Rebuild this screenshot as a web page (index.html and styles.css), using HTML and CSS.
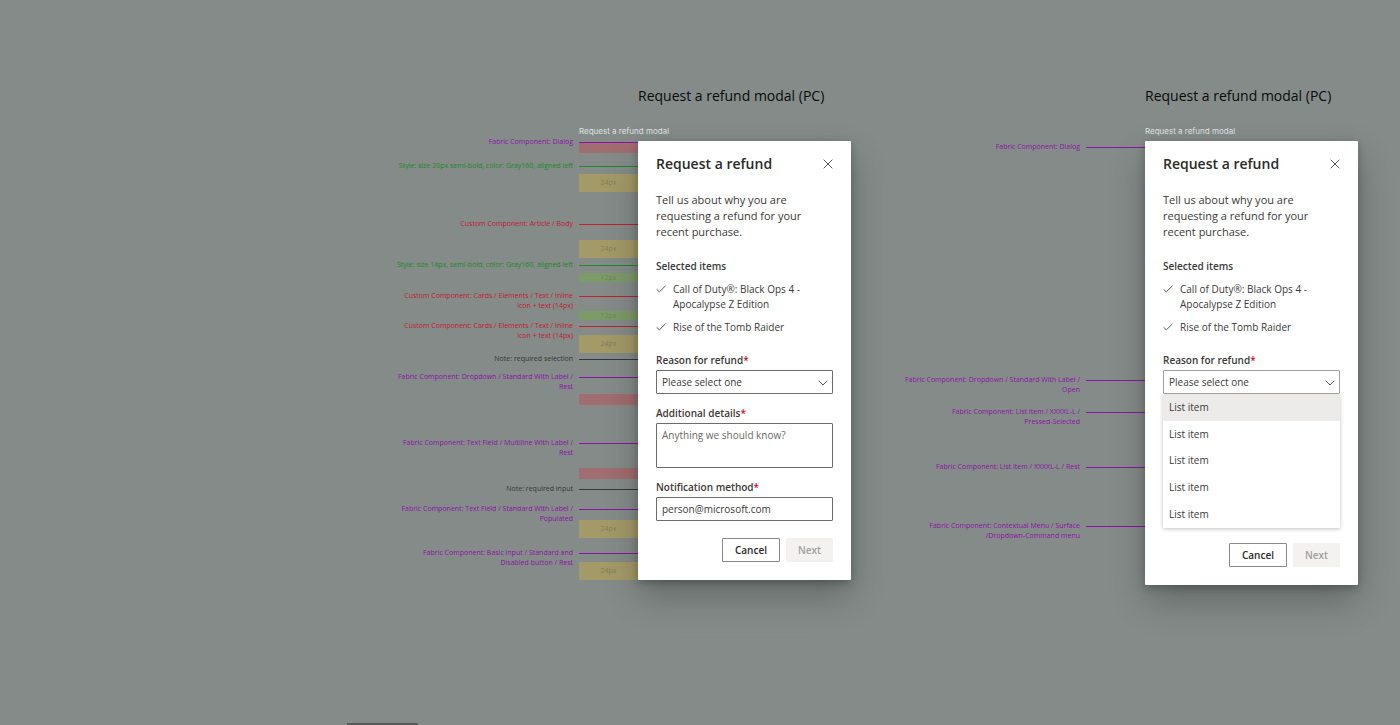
FILE: index.html
```
<!DOCTYPE html>
<html lang="en">
<head>
<meta charset="utf-8">
<title>Request a refund modal</title>
<link rel="stylesheet" href="styles.css">
</head>
<body>
<main class="canvas">
  <section class="board">
    <h2 class="board-title">Request a refund modal (PC)</h2>
    <p class="frame-name frame-name-wide">Request a refund modal</p>
    <div class="notes">
      <span class="band pink at-top"></span>
      <span class="band yellow at-body">24px</span>
      <span class="band yellow at-selected">24px</span>
      <span class="band green at-items">12px</span>
      <span class="band green at-item-gap">12px</span>
      <span class="band yellow at-reason">24px</span>
      <span class="band pink at-details"></span>
      <span class="band pink at-method"></span>
      <span class="band yellow at-actions">24px</span>
      <span class="band yellow at-bottom">24px</span>
      <p class="note purple n-dialog">Fabric Component: Dialog</p>
      <p class="note leaf n-title">Style: size 20px semi-bold, color: Gray160, aligned left</p>
      <p class="note red n-body">Custom Component: Article / Body</p>
      <p class="note leaf n-selected">Style: size 14px, semi-bold, color: Gray160, aligned left</p>
      <p class="note red n-item-one">Custom Component: Cards / Elements / Text / Inline<br>icon + text (14px)</p>
      <p class="note red n-item-two">Custom Component: Cards / Elements / Text / Inline<br>icon + text (14px)</p>
      <p class="note dark n-required">Note: required selection</p>
      <p class="note purple n-dropdown">Fabric Component: Dropdown / Standard With Label /<br>Rest</p>
      <p class="note purple n-multiline">Fabric Component: Text Field / Multiline With Label /<br>Rest</p>
      <p class="note dark n-input">Note: required input</p>
      <p class="note purple n-field">Fabric Component: Text Field / Standard With Label /<br>Populated</p>
      <p class="note purple n-buttons">Fabric Component: Basic input / Standard and<br>Disabled button / Rest</p>
    </div>
    <form class="modal">
      <header class="modal-head">
        <h1 class="modal-title">Request a refund</h1>
        <button class="close" type="button" aria-label="Close"><svg viewBox="0 0 10 10"><path d="M.7.7l8.6 8.6M9.3.7L.7 9.3"/></svg></button>
      </header>
      <p class="lead">Tell us about why you are<br>requesting a refund for your<br>recent purchase.</p>
      <h3 class="caption">Selected items</h3>
      <ul class="items">
        <li><svg viewBox="0 0 10 8"><path d="M.6 4.3l2.7 2.6L9.5.8"/></svg><span>Call of Duty®: Black Ops 4 -<br>Apocalypse Z Edition</span></li>
        <li><svg viewBox="0 0 10 8"><path d="M.6 4.3l2.7 2.6L9.5.8"/></svg><span>Rise of the Tomb Raider</span></li>
      </ul>
      <div class="field">
        <label for="reason">Reason for refund<b>*</b></label>
        <div class="select-box">
          <select id="reason"><option>Please select one</option></select>
          <svg viewBox="0 0 10 6"><path d="M.7.7L5 5 9.3.7"/></svg>
        </div>
      </div>
      <div class="field">
        <label for="details">Additional details<b>*</b></label>
        <textarea id="details" placeholder="Anything we should know?"></textarea>
      </div>
      <div class="field">
        <label for="method">Notification method<b>*</b></label>
        <input id="method" type="text" value="person@microsoft.com">
      </div>
      <footer class="actions">
        <button class="btn" type="button">Cancel</button>
        <button class="btn btn-next" type="button" disabled>Next</button>
      </footer>
    </form>
  </section>

  <section class="board">
    <h2 class="board-title">Request a refund modal (PC)</h2>
    <p class="frame-name">Request a refund modal</p>
    <div class="notes">
      <p class="note purple n-open-dialog">Fabric Component: Dialog</p>
      <p class="note purple n-open">Fabric Component: Dropdown / Standard With Label /<br>Open</p>
      <p class="note purple n-pressed">Fabric Component: List Item / XXXXL-L /<br>Pressed-Selected</p>
      <p class="note purple n-rest">Fabric Component: List Item / XXXXL-L / Rest</p>
      <p class="note purple n-menu">Fabric Component: Contextual Menu / Surface<br>/Dropdown-Command menu</p>
    </div>
    <form class="modal">
      <header class="modal-head">
        <h1 class="modal-title">Request a refund</h1>
        <button class="close" type="button" aria-label="Close"><svg viewBox="0 0 10 10"><path d="M.7.7l8.6 8.6M9.3.7L.7 9.3"/></svg></button>
      </header>
      <p class="lead">Tell us about why you are<br>requesting a refund for your<br>recent purchase.</p>
      <h3 class="caption">Selected items</h3>
      <ul class="items">
        <li><svg viewBox="0 0 10 8"><path d="M.6 4.3l2.7 2.6L9.5.8"/></svg><span>Call of Duty®: Black Ops 4 -<br>Apocalypse Z Edition</span></li>
        <li><svg viewBox="0 0 10 8"><path d="M.6 4.3l2.7 2.6L9.5.8"/></svg><span>Rise of the Tomb Raider</span></li>
      </ul>
      <div class="field">
        <label for="reason-open">Reason for refund<b>*</b></label>
        <div class="select-box is-open">
          <select id="reason-open"><option>Please select one</option></select>
          <svg viewBox="0 0 10 6"><path d="M.7.7L5 5 9.3.7"/></svg>
        </div>
        <ul class="menu" role="listbox" aria-label="Reason for refund">
          <li role="option" aria-selected="true">List item</li>
          <li role="option">List item</li>
          <li role="option">List item</li>
          <li role="option">List item</li>
          <li role="option">List item</li>
        </ul>
      </div>
      <footer class="actions actions-open">
        <button class="btn" type="button">Cancel</button>
        <button class="btn btn-next" type="button" disabled>Next</button>
      </footer>
    </form>
  </section>
  <div class="next-frame"></div>
</main>
</body>
</html>
```
FILE: styles.css
```
* { box-sizing: border-box; }

body, h1, h2, h3, p, ul { margin: 0; padding: 0; }

body {
  background: #848b89;
  color: #3a3938;
  font-family: "Open Sans", "Noto Sans", sans-serif;
  font-size: 10px;
}

ul { list-style: none; }

button, input, select, textarea { font: inherit; color: inherit; }

svg { fill: none; stroke: #5a5856; stroke-width: 1; }

.canvas {
  position: relative;
  display: flex;
  justify-content: flex-end;
  align-items: flex-start;
  gap: 51px;
  min-height: 100vh;
  padding: 84px 42px 0 0;
  overflow: hidden;
}

.board {
  display: grid;
  grid-template-columns: 243px 213px;
  grid-template-rows: 24px 33px auto;
}

.board-title {
  grid-column: 2;
  color: #0a0c0b;
  font-size: 14px;
  font-weight: 400;
  line-height: 24px;
  white-space: nowrap;
}

.frame-name {
  grid-column: 2;
  padding-top: 18px;
  color: #dfe2e1;
  font-family: Inter, sans-serif;
  font-size: 8px;
  line-height: 10px;
}

.frame-name-wide { grid-column: 1 / 3; padding-left: 184px; }

/* Spec annotations, pinned beside the part that they describe */
.notes { position: relative; grid-column: 1; }

.note {
  position: absolute;
  right: 0;
  padding-right: 65px;
  font-size: 7px;
  line-height: 10px;
  text-align: right;
  white-space: nowrap;
}

.note::after {
  content: "";
  position: absolute;
  top: 5px;
  right: 0;
  width: 59px;
  height: 1px;
  background: currentColor;
}

.purple { color: #8c14a6; }
.leaf { color: #1d8a25; }
.red { color: #c2202f; }
.dark { color: #343a38; }

.n-dialog { top: -4px; }
.n-title { top: 20px; }
.n-body { top: 78px; }
.n-selected { top: 119px; }
.n-item-one { top: 150px; }
.n-item-two { top: 180px; }
.n-required { top: 213px; }
.n-dropdown { top: 231px; }
.n-multiline { top: 297px; }
.n-input { top: 343px; }
.n-field { top: 363px; }
.n-buttons { top: 407px; }

.n-open-dialog { top: 1px; }
.n-open { top: 234px; }
.n-pressed { top: 266px; }
.n-rest { top: 321px; }
.n-menu { top: 380px; }

.band {
  position: absolute;
  right: 0;
  width: 59px;
  color: #857d5c;
  font-size: 7px;
  text-align: center;
}

.yellow { height: 18px; background: #a39a68; line-height: 18px; }
.green { height: 9px; background: #7d9a69; color: #6c8560; line-height: 9px; }
.pink { height: 11px; background: #a06d70; }

.at-top { top: 1px; }
.at-body { top: 33px; }
.at-selected { top: 99px; }
.at-items { top: 132px; }
.at-item-gap { top: 170px; }
.at-reason { top: 194px; }
.at-details { top: 253px; }
.at-method { top: 327px; }
.at-actions { top: 379px; }
.at-bottom { top: 421px; }

.modal {
  position: relative;
  grid-column: 2;
  padding: 13px 18px 18px;
  background: #fff;
  border-radius: 1px;
  box-shadow: 0 16px 36px rgba(0, 0, 0, .24), 0 3px 9px rgba(0, 0, 0, .24);
}

.modal-head { display: flex; justify-content: space-between; }

.modal-title { color: #2b2a29; font-size: 14px; font-weight: 600; line-height: 20px; }

.close {
  display: grid;
  place-items: center;
  width: 10px;
  height: 20px;
  padding: 0;
  border: 0;
  background: none;
}

.close svg { width: 10px; height: 10px; }

.lead {
  margin-top: 18px;
  font-size: 11px;
  line-height: 16px;
  white-space: nowrap;
}

.caption {
  margin-top: 19px;
  font-size: 10px;
  font-weight: 600;
  line-height: 14px;
}

.items {
  display: grid;
  gap: 8px;
  margin: 9px 0 18px;
  line-height: 15px;
}

.items li { display: flex; gap: 7px; white-space: nowrap; }
.items svg { width: 10px; height: 8px; margin-top: 3px; }

.field { display: grid; gap: 3px; }
.field + .field { margin-top: 12px; }
.field label { font-weight: 600; line-height: 14px; }
.field b { color: #c50f1f; font-weight: 600; }

.field input, .field select, .field textarea {
  display: block;
  width: 100%;
  height: 24px;
  margin: 0;
  padding: 0 5px;
  border: 1px solid #6e6c6a;
  border-radius: 1px;
  background: #fff;
  outline: 0;
  appearance: none;
}

.field textarea {
  height: 45px;
  padding: 4px 5px;
  line-height: 15px;
  resize: none;
}

.field textarea::placeholder { color: #6b6967; opacity: 1; }

.select-box { position: relative; }

.select-box svg {
  position: absolute;
  top: 10px;
  right: 5px;
  width: 10px;
  height: 6px;
  pointer-events: none;
}

.field .is-open select { border-color: #a19f9d; }

.menu {
  display: grid;
  grid-auto-rows: 1fr;
  min-height: 134px;
  margin-top: -3px;
  padding-bottom: 1px;
  background: #fff;
  box-shadow: 0 1px 4px rgba(0, 0, 0, .24);
}

.menu li { display: flex; align-items: center; padding: 0 6px; }
.menu [aria-selected="true"] { background: #edebe9; }

.actions {
  display: flex;
  justify-content: flex-end;
  gap: 6px;
  margin-top: 17px;
}

.actions-open { margin-top: 15px; }

.btn {
  height: 24px;
  padding: 0 12px;
  border: 1px solid #8a8886;
  border-radius: 1px;
  background: #fff;
  color: #2b2a29;
  font-weight: 600;
}

.btn-next {
  padding: 0 11px;
  border-color: #f3f2f1;
  background: #f3f2f1;
  color: #a19f9d;
}

/* Top edge of the frame below on the canvas */
.next-frame {
  position: absolute;
  bottom: 0;
  left: 347px;
  width: 71px;
  height: 2px;
  background: #565b5a;
}
```
